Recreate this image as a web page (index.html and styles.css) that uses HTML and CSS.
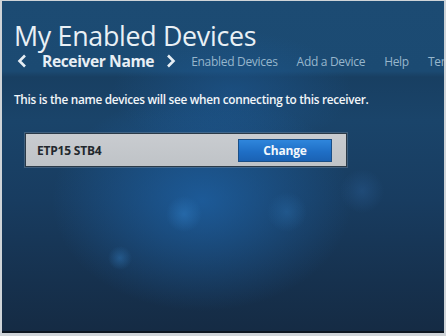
FILE: index.html
```
<!DOCTYPE html>
<html>
<head>
<meta charset="utf-8">
<link rel="stylesheet" href="styles.css">
</head>
<body>
<div class="frame">
  <div class="screen">
    <h1 class="title">My Enabled Devices</h1>
    <nav class="nav">
      <span class="chev">
        <svg width="10" height="14" viewBox="0 0 10 14"><path d="M8 1.5 L2.5 7 L8 12.5" fill="none" stroke="#e6eef4" stroke-width="2.6"/></svg>
      </span>
      <span class="current">Receiver Name</span>
      <span class="chev chev-r">
        <svg width="10" height="14" viewBox="0 0 10 14"><path d="M2 1.5 L7.5 7 L2 12.5" fill="none" stroke="#e6eef4" stroke-width="2.6"/></svg>
      </span>
      <span class="link">Enabled Devices</span>
      <span class="link">Add a Device</span>
      <span class="link">Help</span>
      <span class="link">Terms</span>
    </nav>
    <p class="desc">This is the name devices will see when connecting to this receiver.</p>
    <div class="namebox">
      <span class="name">ETP15 STB4</span>
      <span class="btn">Change</span>
    </div>
  </div>
</div>
</body>
</html>
```
FILE: styles.css
```
html, body {
  margin: 0;
  padding: 0;
  width: 446px;
  height: 336px;
  overflow: hidden;
  background: #d4d8dc;
}
.frame {
  width: 446px;
  height: 336px;
  box-sizing: border-box;
  padding: 1px 2px 3px 2px;
  background: #cfd4d8;
}
.screen {
  height: 100%;
  box-sizing: border-box;
  overflow: hidden;
  border-bottom: 2px solid #0c1620;
  font-family: "Open Sans", "Noto Sans", sans-serif;
  color: #eef3f7;
  padding: 0 0 0 12px;
  background:
    radial-gradient(circle at 118px 257px, rgba(45,110,170,0.55) 0, rgba(45,110,170,0) 12px),
    radial-gradient(circle at 182px 213px, rgba(45,120,190,0.55) 0, rgba(45,120,190,0) 18px),
    radial-gradient(circle at 285px 211px, rgba(45,115,180,0.35) 0, rgba(45,115,180,0) 20px),
    radial-gradient(circle at 360px 190px, rgba(45,100,160,0.35) 0, rgba(45,100,160,0) 22px),
    radial-gradient(ellipse 150px 110px at 200px 200px, rgba(30,100,170,0.75) 0, rgba(30,100,170,0) 100%),
    radial-gradient(ellipse 120px 60px at 230px 90px, rgba(30,95,160,0.45) 0, rgba(30,95,160,0) 100%),
    linear-gradient(180deg, #1c4b73 0, #1b4a72 70px, #183f62 76px, #1a446a 120px, #183c60 200px, #16314e 280px, #152b44 330px);
}
.title {
  margin: 0;
  padding-top: 20px;
  font-size: 26.8px;
  font-weight: 400;
  line-height: 30px;
  letter-spacing: -0.3px;
  color: #e9f0f5;
}
.nav {
  display: flex;
  align-items: center;
  height: 20px;
  margin-top: 0;
  white-space: nowrap;
}
.nav > span {
  flex-shrink: 0;
}
.chev {
  display: flex;
  align-items: center;
  margin-left: 3px;
  width: 25px;
}
.chev-r {
  margin-left: 12px;
  width: 14px;
  margin-right: 11px;
}
.current {
  font-size: 15.6px;
  font-weight: 700;
  letter-spacing: -0.4px;
  color: #e8eff5;
}
.link {
  font-size: 12px;
  color: #97b6cc;
  margin-right: 19px;
  letter-spacing: -0.3px;
}
.desc {
  margin: 20px 0 0 0;
  font-size: 11.8px;
  font-weight: 600;
  letter-spacing: -0.3px;
  color: #f2f6f9;
}
.namebox {
  display: flex;
  align-items: center;
  justify-content: space-between;
  width: 322px;
  height: 34px;
  box-sizing: border-box;
  margin: 26px 0 0 11px;
  padding: 0 14px 0 11px;
  background: linear-gradient(180deg, #c9ccd0 0, #bfc3c7 100%);
  border: 1px solid #2a3a48;
  box-shadow: 0 0 0 1px rgba(120,140,160,0.4);
}
.name {
  font-size: 12px;
  font-weight: 700;
  color: #23282d;
  letter-spacing: -0.2px;
}
.btn {
  display: flex;
  align-items: center;
  justify-content: center;
  width: 92px;
  height: 21px;
  background: linear-gradient(180deg, #2f86dc 0, #1f6fc6 55%, #1a62b4 100%);
  border: 1px solid #1b4f86;
  color: #f4f8fc;
  font-size: 12px;
  font-weight: 700;
  letter-spacing: -0.2px;
}
```
